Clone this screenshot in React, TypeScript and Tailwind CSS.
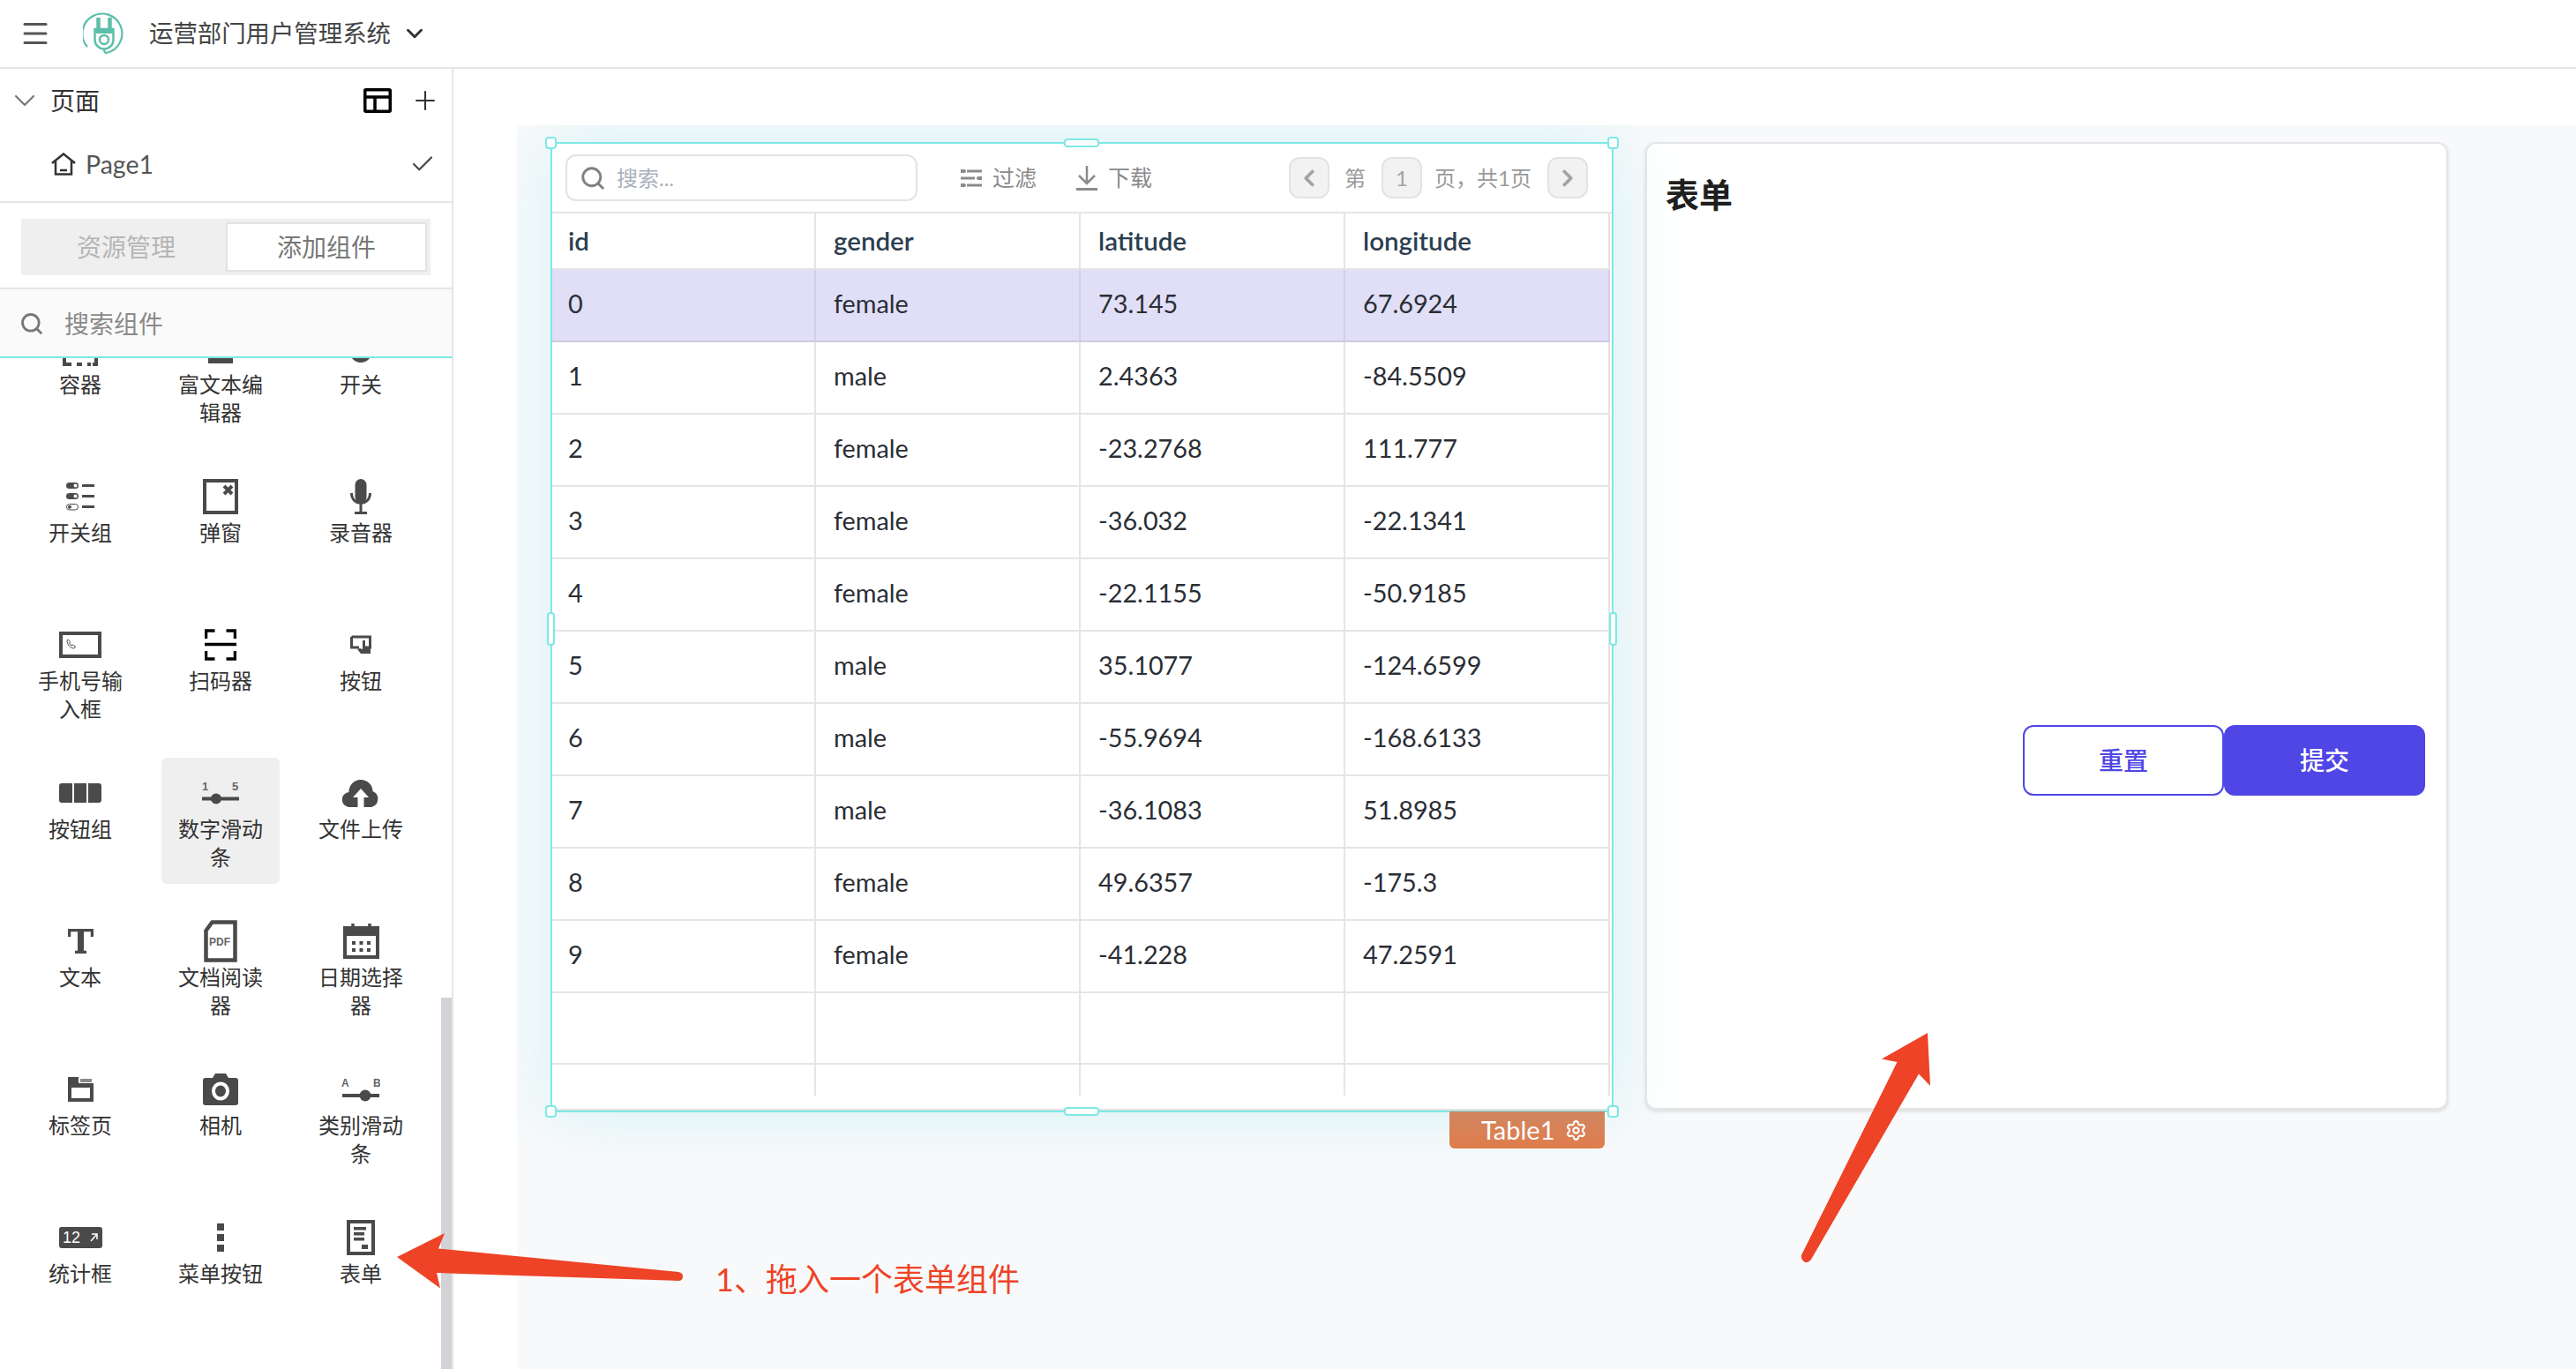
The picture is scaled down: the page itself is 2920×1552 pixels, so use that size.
import { Check, ChevronDown, ChevronLeft, ChevronRight, Menu, Plus, Search, Settings } from 'lucide-react'
import type { ReactNode } from 'react'

const INK = '#4a4a4a'

function Svg({ w, h, children }: { w: number; h: number; children: ReactNode }) {
  return (
    <svg width={w} height={h} viewBox={`0 0 ${w} ${h}`} className="block">
      {children}
    </svg>
  )
}

const icons: Record<string, ReactNode> = {
  // the first row is scrolled under the search box, only its lower edge shows
  container: (
    <Svg w={40} h={48}>
      <path d="M2 30v12h8M16 42h6M28 42h4M34 42h4V30" fill="none" stroke={INK} strokeWidth="4" />
    </Svg>
  ),
  richText: (
    <Svg w={28} h={48}>
      <rect x="0" y="30" width="28" height="11" fill={INK} />
    </Svg>
  ),
  toggle: (
    <Svg w={28} h={48}>
      <ellipse cx="14" cy="26" rx="13" ry="14" fill={INK} />
    </Svg>
  ),
  toggleGroup: (
    <Svg w={32} h={32}>
      <rect x="0" y="0" width="14" height="7" rx="3.5" fill={INK} />
      <circle cx="10.500" cy="3.500" r="2" fill="#fff" />
      <rect x="0" y="12" width="14" height="7" rx="3.500" fill={INK} />
      <circle cx="10.500" cy="15.500" r="2" fill="#fff" />
      <rect x="0.500" y="24.500" width="13" height="6.500" rx="3.250" fill="none" stroke={INK} />
      <circle cx="4" cy="27.800" r="2" fill={INK} />
      <path d="M18 3.500h14M18 15.500h14M18 27.500h14" stroke={INK} strokeWidth="3" />
    </Svg>
  ),
  modal: (
    <Svg w={40} h={40}>
      <rect x="2" y="2" width="36" height="36" fill="none" stroke={INK} strokeWidth="4" />
      <path d="M24 8l9 9M33 8l-9 9" stroke={INK} strokeWidth="4" />
    </Svg>
  ),
  mic: (
    <Svg w={24} h={40}>
      <rect x="5.500" y="0" width="13" height="27" rx="6.500" fill={INK} />
      <path d="M1.500 16c0 15 21 15 21 0M12 28v9M5 38.500h14" fill="none" stroke={INK} strokeWidth="3" />
    </Svg>
  ),
  phoneInput: (
    <Svg w={48} h={30}>
      <rect x="2" y="2" width="44" height="26" fill="#fff" stroke={INK} strokeWidth="4" />
      <path d="M9 10c0 5 4 9 8 9l1.500-2-3-2-1.500 1-2.500-3 1-1.500-2-2.500z" fill="none" stroke={INK} strokeWidth="1" />
    </Svg>
  ),
  scanner: (
    <Svg w={36} h={36}>
      <path d="M1.500 11V2h10M24.500 2h10v9M1.500 25v9h10M24.500 34h10v-9" fill="none" stroke="#000" strokeWidth="3.500" />
      <path d="M0 17.500h36" stroke="#000" strokeWidth="3.500" />
    </Svg>
  ),
  button: (
    <Svg w={24} h={22}>
      <path d="M1.500 2h21v12h-6M10 14H1.500V2" fill="none" stroke={INK} strokeWidth="3" />
      <path d="M14 6h3v8h6v7H12l-4-5 3-1 3 1z" fill={INK} />
    </Svg>
  ),
  buttonGroup: (
    <Svg w={48} h={22}>
      <path d="M3 0h12v22H3a3 3 0 0 1-3-3V3a3 3 0 0 1 3-3zM17 0h14v22H17zM33 0h12a3 3 0 0 1 3 3v16a3 3 0 0 1-3 3H33z" fill={INK} />
    </Svg>
  ),
  numberSlider: (
    <Svg w={42} h={28}>
      <text x="0" y="11" fontSize="13" fontWeight="700" fill="#666" fontFamily="Liberation Sans, sans-serif">1</text>
      <text x="34" y="11" fontSize="13" fontWeight="700" fill="#666" fontFamily="Liberation Sans, sans-serif">5</text>
      <path d="M0 20.500h42" stroke={INK} strokeWidth="4" />
      <circle cx="16" cy="20.500" r="6" fill={INK} />
    </Svg>
  ),
  upload: (
    <Svg w={42} h={32}>
      <path d="M9 32a8.500 8.500 0 0 1-1.500-17 13.500 13.500 0 0 1 27-1A9.500 9.500 0 0 1 33 32z" fill={INK} />
      <path d="M21 11l-9 10h5.500v11h7V21H30z" fill="#fff" />
    </Svg>
  ),
  text: (
    <Svg w={29} h={28}>
      <path d="M1.500 9V1.500h26V9M8 26.500h13" fill="none" stroke={INK} strokeWidth="3.500" />
      <path d="M11 2h7v24h-7z" fill={INK} />
    </Svg>
  ),
  pdf: (
    <Svg w={38} h={48}>
      <path d="M9.500 2.500h26v43h-33V12z" fill="none" stroke={INK} strokeWidth="4.500" />
      <text x="6" y="29" fontSize="12" fontWeight="700" fill="#666" fontFamily="Liberation Sans, sans-serif">PDF</text>
    </Svg>
  ),
  calendar: (
    <Svg w={41} h={40}>
      <rect x="2" y="5" width="37" height="33" fill="none" stroke={INK} strokeWidth="4" />
      <rect x="2" y="5" width="37" height="9" fill={INK} />
      <path d="M11 0v7M30 0v7" stroke={INK} strokeWidth="3.500" />
      <path d="M10 20h4v4h-4zM18.500 20h4v4h-4zM27 20h4v4h-4zM10 28h4v4h-4zM18.500 28h4v4h-4zM27 28h4v4h-4z" fill={INK} />
    </Svg>
  ),
  tabs: (
    <Svg w={29} h={28}>
      <path d="M0 0h12v7h17v21H0z" fill={INK} />
      <rect x="4" y="12" width="21" height="12" fill="#fff" />
      <rect x="14" y="2" width="13" height="4" fill="#8a8a8a" />
    </Svg>
  ),
  camera: (
    <Svg w={40} h={36}>
      <path d="M3 5h8l3-5h12l3 5h8a3 3 0 0 1 3 3v25a3 3 0 0 1-3 3H3a3 3 0 0 1-3-3V8a3 3 0 0 1 3-3z" fill={INK} />
      <ellipse cx="20" cy="20" rx="10" ry="10.500" fill="#fff" />
      <ellipse cx="20" cy="20" rx="6" ry="6.500" fill={INK} />
    </Svg>
  ),
  categorySlider: (
    <Svg w={44} h={27}>
      <text x="0" y="10" fontSize="12" fontWeight="700" fill="#666" fontFamily="Liberation Sans, sans-serif">A</text>
      <text x="36" y="10" fontSize="12" fontWeight="700" fill="#666" fontFamily="Liberation Sans, sans-serif">B</text>
      <path d="M1 20h42" stroke={INK} strokeWidth="4" />
      <circle cx="27" cy="20" r="6.500" fill={INK} />
    </Svg>
  ),
  stat: (
    <Svg w={49} h={24}>
      <rect x="0" y="0" width="49" height="24" rx="3" fill={INK} />
      <text x="4" y="18" fontSize="18" fill="#fff" fontFamily="Liberation Sans, sans-serif">12</text>
      <path d="M36 16l7-8M37 8h6v6" fill="none" stroke="#fff" strokeWidth="1.500" />
    </Svg>
  ),
  dots: (
    <Svg w={10} h={32}>
      <path d="M1 0h8v8H1zM1 12h8v8H1zM1 24h8v8H1z" fill={INK} />
    </Svg>
  ),
  form: (
    <Svg w={32} h={40}>
      <rect x="2" y="2" width="28" height="36" fill="none" stroke={INK} strokeWidth="4" />
      <path d="M8 8h14v3.500H8zM8 14h12v3.500H8zM8 20h12v3.500H8zM17 28h7v5h-7z" fill={INK} />
    </Svg>
  ),
}

const widgets = [
  { label: '容器', icon: 'container' },
  { label: '富文本编辑器', icon: 'richText' },
  { label: '开关', icon: 'toggle' },
  { label: '开关组', icon: 'toggleGroup' },
  { label: '弹窗', icon: 'modal' },
  { label: '录音器', icon: 'mic' },
  { label: '手机号输入框', icon: 'phoneInput' },
  { label: '扫码器', icon: 'scanner' },
  { label: '按钮', icon: 'button' },
  { label: '按钮组', icon: 'buttonGroup' },
  { label: '数字滑动条', icon: 'numberSlider', active: true },
  { label: '文件上传', icon: 'upload' },
  { label: '文本', icon: 'text' },
  { label: '文档阅读器', icon: 'pdf' },
  { label: '日期选择器', icon: 'calendar' },
  { label: '标签页', icon: 'tabs' },
  { label: '相机', icon: 'camera' },
  { label: '类别滑动条', icon: 'categorySlider' },
  { label: '统计框', icon: 'stat' },
  { label: '菜单按钮', icon: 'dots' },
  { label: '表单', icon: 'form' },
]

const rows = [
  ['0', 'female', '73.145', '67.6924'],
  ['1', 'male', '2.4363', '-84.5509'],
  ['2', 'female', '-23.2768', '111.777'],
  ['3', 'female', '-36.032', '-22.1341'],
  ['4', 'female', '-22.1155', '-50.9185'],
  ['5', 'male', '35.1077', '-124.6599'],
  ['6', 'male', '-55.9694', '-168.6133'],
  ['7', 'male', '-36.1083', '51.8985'],
  ['8', 'female', '49.6357', '-175.3'],
  ['9', 'female', '-41.228', '47.2591'],
]

function Logo() {
  return (
    <svg width="48" height="50" viewBox="0 0 48 50" fill="none" stroke="#5dbfa9" className="block">
      <path d="M5 40A22.500 22.500 0 1 1 27 47" strokeWidth="2.200" />
      <path d="M17.500 7v13M30.500 7v13" strokeWidth="4.500" />
      <path d="M13.500 20h21v12a10.500 10.500 0 0 1-21 0z" strokeWidth="2.500" />
      <path d="M13 23h22" strokeWidth="4" />
      <circle cx="24" cy="32" r="5" strokeWidth="2.500" />
      <path d="M24 43c0 3 1 4 3 4.500" strokeWidth="2.200" />
    </svg>
  )
}

function Sidebar() {
  return (
    <aside className="w-[514px] shrink-0 border-r-2 border-[#e5e5ea] flex flex-col relative overflow-hidden">
      <div className="h-[72px] flex items-center pl-[8px] pr-[13px]">
        <ChevronDown size={40} strokeWidth={1.3} className="text-[#777]" />
        <span className="ml-[9px] text-[28px] text-[#333]">页面</span>
        <svg width="32" height="28" viewBox="0 0 32 28" className="ml-auto" fill="none" stroke="#000" strokeWidth="3.500">
          <rect x="1.750" y="1.750" width="28.500" height="24.500" rx="1" />
          <path d="M1.500 10h29M13 10v17" />
        </svg>
        <Plus size={34} strokeWidth={1.5} className="ml-[21px] text-[#333]" />
      </div>
      <div className="h-[80px] flex items-center pl-[58px] pr-[18px] pb-[6px] border-b-2 border-[#e5e5ea]">
        <svg width="28" height="26" viewBox="0 0 28 26" fill="none" stroke="#333" strokeWidth="2.500">
          <path d="M1 12L14 1.500 27 12M5 9v15.500h18V9M10 20h8" />
        </svg>
        <span className="ml-[11px] text-[28.500px] text-[#555]">Page1</span>
        <Check size={30} strokeWidth={1.7} className="ml-auto text-[#444]" />
      </div>
      <div className="h-[98px] shrink-0 border-b-2 border-[#e5e5ea] px-[24px] pt-[18px]">
        <div className="w-[464px] h-[64px] bg-[#efefef] flex items-center pl-[232px] relative">
          <span className="absolute left-[63px] text-[28px] text-[#b5b5b5]">资源管理</span>
          <div className="w-[228px] h-[56px] bg-white border-2 border-[#e2e2e2] flex items-center justify-center text-[28px] text-[#777]">
            添加组件
          </div>
        </div>
      </div>
      <div className="h-[78px] shrink-0 bg-[#fafafa] border-b-2 border-[#7ee8e6] flex items-center pl-[22px] pt-[2px]">
        <Search size={28} strokeWidth={2.4} className="text-[#777]" />
        <span className="ml-[23px] text-[28px] text-[#8a8a8a]">搜索组件</span>
      </div>
      <div className="flex-1 overflow-hidden">
        <div className="grid grid-cols-[134px_134px_134px] gap-x-[25px] gap-y-[25px] pl-[24px] -mt-[51px]">
          {widgets.map((widget) => (
            <div
              key={widget.label}
              className={
                widget.active
                  ? 'h-[143px] rounded-[6px] bg-[#efefef] pt-4 px-2 text-center'
                  : 'h-[143px] pt-4 px-2 text-center'
              }
            >
              <div className="h-12 flex items-center justify-center">{icons[widget.icon]}</div>
              <p className="pt-[1px] text-[24px] leading-8 text-[#333]">{widget.label}</p>
            </div>
          ))}
        </div>
      </div>
      <div className="absolute right-0 bottom-0 w-3 h-[421px] bg-[#d2d2d7]" />
    </aside>
  )
}

function Handle({ className }: { className: string }) {
  return <span className={`absolute bg-white border-2 border-[#7ee8e6] rounded-[4px] ${className}`} />
}

function PagerBox({ children }: { children: ReactNode }) {
  return (
    <div className="w-[46px] h-[47px] rounded-[12px] bg-[#f2f2f2] border-2 border-[#e3e3e3] flex items-center justify-center text-[#a3a3a3]">
      {children}
    </div>
  )
}

function TableWidget() {
  return (
    <section className="w-[1205px] h-[1100px] shrink-0 relative bg-white border-2 border-[#7ee8e6] shadow-[0_0_70px_rgba(126,232,230,0.28)]">
      <div className="h-full border-b-2 border-[#e2e2e2]">
        <div className="h-[79px] flex items-center border-b-2 border-[#e5e5e5] pl-[15px] pr-[27px] text-[25px] text-[#8a8a8a]">
          <div className="w-[399px] h-[53px] rounded-[12px] border-2 border-[#e3e3e3] flex items-center pl-[14px]">
            <Search size={30} strokeWidth={2.3} className="text-[#808080]" />
            <span className="ml-[12px] text-[24px] text-[#a8b0bb]">搜索...</span>
          </div>
          <svg width="24" height="24" viewBox="0 0 24 24" className="ml-[49px]" fill="none" stroke="#8a8a8a" strokeWidth="3">
            <path d="M7 4h17M0 12h16M7 20h17" />
            <path d="M0 4h4M20 12h4M0 20h4" strokeLinecap="round" strokeWidth="4" />
          </svg>
          <span className="ml-[12px]">过滤</span>
          <svg width="24" height="28" viewBox="0 0 24 28" className="ml-[45px]" fill="none" stroke="#8a8a8a" strokeWidth="2.500">
            <path d="M12 0v19M3 11l9 9 9-9" />
            <path d="M0 26.500h24" strokeWidth="3" />
          </svg>
          <span className="ml-[12px]">下载</span>
          <div className="ml-auto flex items-center text-[24px] text-[#9a9a9a]">
            <PagerBox>
              <ChevronLeft size={30} strokeWidth={3} />
            </PagerBox>
            <span className="ml-[17px]">第</span>
            <div className="ml-[18px]">
              <PagerBox>1</PagerBox>
            </div>
            <span className="ml-[14px] w-[128px]">页，共1页</span>
            <PagerBox>
              <ChevronRight size={30} strokeWidth={3} />
            </PagerBox>
          </div>
        </div>
        <div className="w-[1199px] grid grid-cols-[299px_300px_300px_300px] h-[64px] border-b-2 border-[#e5e5e5] text-[29.500px] font-semibold text-[#2c3e50]">
          {['id', 'gender', 'latitude', 'longitude'].map((name) => (
            <div key={name} className="border-r-2 border-[#e5e5e5] pl-5 first:pl-[18px] flex items-center">
              {name}
            </div>
          ))}
        </div>
        {rows.map((row, index) => (
          <div
            key={row[0]}
            className={
              index === 0
                ? 'w-[1199px] grid grid-cols-[299px_300px_300px_300px] h-[82px] bg-[#e1dff7] border-b-2 border-[#cdcae0] text-[28.800px] text-[#2a2e35]'
                : 'w-[1199px] grid grid-cols-[299px_300px_300px_300px] h-[82px] border-b-2 border-[#e5e5e5] text-[28.800px] text-[#2a2e35]'
            }
          >
            {row.map((cell, cellIndex) => (
              <div
                key={cellIndex}
                className={
                  index === 0
                    ? 'border-r-2 border-[#d2cfe6] pl-5 first:pl-[18px] pb-[3px] flex items-center'
                    : 'border-r-2 border-[#e5e5e5] pl-5 first:pl-[18px] pb-[3px] flex items-center'
                }
              >
                {cell}
              </div>
            ))}
          </div>
        ))}
        <div className="w-[1199px] grid grid-cols-[299px_300px_300px_300px] h-[81px] border-b-2 border-[#e5e5e5]">
          {[0, 1, 2, 3].map((i) => (
            <div key={i} className="border-r-2 border-[#e5e5e5]" />
          ))}
        </div>
        <div className="w-[1199px] grid grid-cols-[299px_300px_300px_300px] h-[35px]">
          {[0, 1, 2, 3].map((i) => (
            <div key={i} className="border-r-2 border-[#e5e5e5]" />
          ))}
        </div>
      </div>
      <Handle className="w-[13px] h-[14px] -left-[8px] -top-[8px]" />
      <Handle className="w-[13px] h-[14px] -right-[8px] -top-[8px]" />
      <Handle className="w-[13px] h-[14px] -left-[8px] -bottom-[8px]" />
      <Handle className="w-[13px] h-[14px] -right-[8px] -bottom-[8px]" />
      <Handle className="w-[40px] h-[10px] left-[580px] -top-[6px]" />
      <Handle className="w-[40px] h-[10px] left-[580px] -bottom-[6px]" />
      <Handle className="w-[9px] h-[38px] -left-[6px] top-[531px]" />
      <Handle className="w-[9px] h-[38px] -right-[6px] top-[531px]" />
      <div className="absolute right-[8px] top-full mt-[1px] w-[176px] h-[42px] rounded-b-[6px] bg-gradient-to-b from-[#cf8660] to-[#e07c4b] flex items-center pl-[36px] text-[29px] text-white">
        Table1
        <Settings size={25} strokeWidth={2} className="ml-[12px]" />
      </div>
    </section>
  )
}

function FormWidget() {
  return (
    <section className="w-[910px] h-[1097px] shrink-0 ml-[36px] rounded-[12px] bg-white border-2 border-[#e6e6e8] shadow-[0_2px_4px_rgba(0,0,0,0.12)] flex flex-col pl-[21px] pr-[24px]">
      <h2 className="mt-[30px] h-[54px] text-[38px] leading-[54px] font-semibold text-[#1f1f1f]">表单</h2>
      <div className="mt-[575px] flex justify-end text-[28px] font-medium">
        <button className="w-[228px] h-[80px] rounded-[12px] bg-white border-2 border-[#4f46e5] text-[#4f46e5]">重置</button>
        <button className="w-[228px] h-[80px] rounded-[12px] bg-[#4f46e5] text-white">提交</button>
      </div>
    </section>
  )
}

export default function App() {
  return (
    <div className="w-[2920px] h-[1552px] relative overflow-hidden bg-white font-['Lato','Noto_Sans_CJK_SC',sans-serif]">
      <header className="h-[78px] border-b-2 border-[#e5e5ea] flex items-center pl-[22px]">
        <Menu size={36} strokeWidth={2} className="text-[#555]" />
        <div className="ml-[36px]">
          <Logo />
        </div>
        <span className="ml-[27px] text-[27.400px] text-[#444]">运营部门用户管理系统</span>
        <ChevronDown size={30} strokeWidth={2.4} className="ml-[12px] text-[#333]" />
      </header>
      <div className="h-[1474px] flex">
        <Sidebar />
        <main className="flex-1 pl-[72px] pt-[64px]">
          <div className="h-full bg-[#f8f9fb] overflow-hidden flex items-start pl-[38px] pt-[19px]">
            <TableWidget />
            <FormWidget />
          </div>
        </main>
      </div>
      <p className="absolute left-[811px] top-[1425px] text-[36px] leading-[50px] text-[#ee4326]">1、拖入一个表单组件</p>
      <svg className="absolute inset-0 pointer-events-none" width="2920" height="1552" viewBox="0 0 2920 1552">
        <path d="M450 1425L504 1398 497 1415.500 769 1442Q774 1443 774 1447 774 1452 769 1452L495 1443 499 1460.500z" fill="#ee4326" />
        <path d="M2185 1171L2133 1200.500 2150.500 1204 2042 1423Q2041 1428 2046 1431 2051 1432 2054 1426L2175 1217.500 2188 1231z" fill="#ee4326" />
      </svg>
    </div>
  )
}
